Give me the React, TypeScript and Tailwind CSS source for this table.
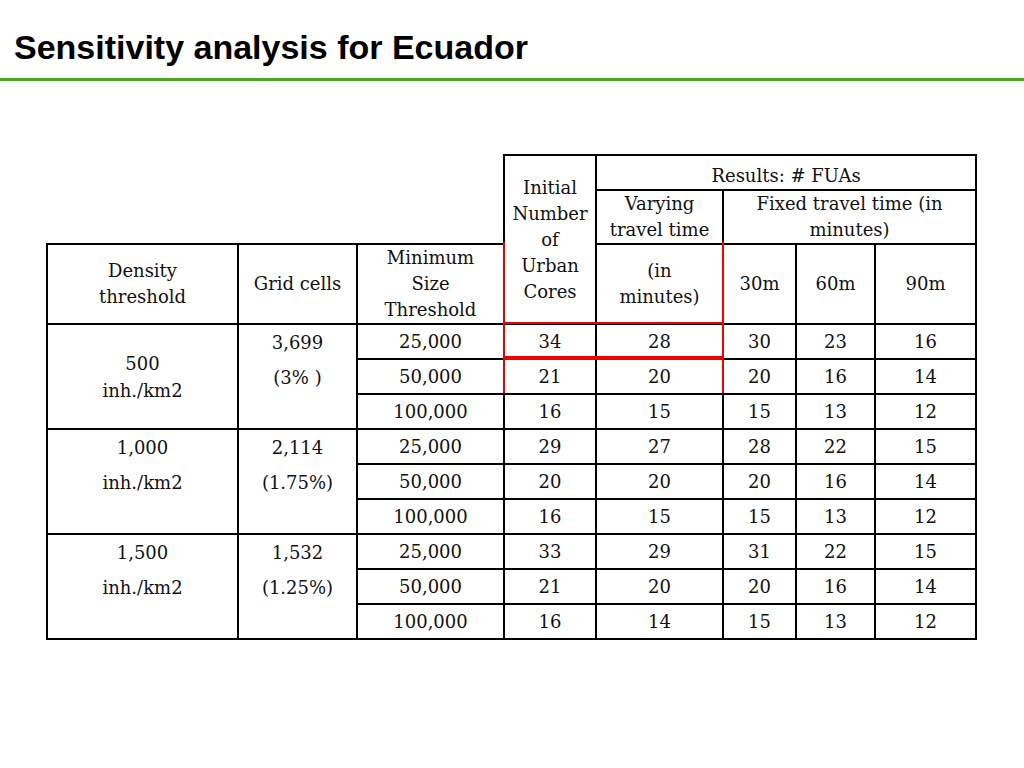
const serif = "font-['DejaVu_Serif',serif]";
const cell = 'border-2 border-black text-center align-middle p-0';

type Group = {
  density: [string, string];
  grid: [string, string];
  centered?: boolean;
  rows: string[][];
};

const groups: Group[] = [
  {
    density: ['500', 'inh./km2'],
    grid: ['3,699', '(3% )'],
    centered: true,
    rows: [
      ['25,000', '34', '28', '30', '23', '16'],
      ['50,000', '21', '20', '20', '16', '14'],
      ['100,000', '16', '15', '15', '13', '12'],
    ],
  },
  {
    density: ['1,000', 'inh./km2'],
    grid: ['2,114', '(1.75%)'],
    rows: [
      ['25,000', '29', '27', '28', '22', '15'],
      ['50,000', '20', '20', '20', '16', '14'],
      ['100,000', '16', '15', '15', '13', '12'],
    ],
  },
  {
    density: ['1,500', 'inh./km2'],
    grid: ['1,532', '(1.25%)'],
    rows: [
      ['25,000', '33', '29', '31', '22', '15'],
      ['50,000', '21', '20', '20', '16', '14'],
      ['100,000', '16', '14', '15', '13', '12'],
    ],
  },
];

function TwoLines({ lines }: { lines: [string, string] }) {
  return (
    <div className="flex flex-col">
      {lines.map((l) => (
        <div key={l} className="h-[35px] flex items-center justify-center">
          {l}
        </div>
      ))}
    </div>
  );
}

function SensitivityTable() {
  return (
    <div className="relative w-[931px]">
      <table className={`border-collapse table-fixed w-[931px] text-[18px] leading-[26px] text-[#111] ${serif}`}>
        <colgroup>
          <col className="w-[191px]" />
          <col className="w-[119px]" />
          <col className="w-[147px]" />
          <col className="w-[92px]" />
          <col className="w-[127px]" />
          <col className="w-[73px]" />
          <col className="w-[79px]" />
          <col className="w-[101px]" />
        </colgroup>
        <tbody>
          <tr className="h-[35px]">
            <td colSpan={3} rowSpan={2} className="p-0" />
            <td rowSpan={3} className={cell}>
              Initial<br />Number<br />of<br />Urban<br />Cores
            </td>
            <td colSpan={4} className={`${cell} pt-[7px] leading-[20px]`}>
              Results: # FUAs
            </td>
          </tr>
          <tr className="h-[53px]">
            <td className={cell}>
              Varying<br />travel time
            </td>
            <td colSpan={3} className={cell}>
              Fixed travel time (in<br />minutes)
            </td>
          </tr>
          <tr className="h-[80px]">
            <td className={cell}>
              Density<br />threshold
            </td>
            <td className={cell}>Grid cells</td>
            <td className={cell}>
              Minimum<br />Size<br />Threshold
            </td>
            <td className={cell}>
              (in<br />minutes)
            </td>
            <td className={cell}>30m</td>
            <td className={cell}>60m</td>
            <td className={cell}>90m</td>
          </tr>
          {groups.map((g) =>
            g.rows.map((r, i) => (
              <tr key={g.density[0] + r[0]} className="h-[35px]">
                {i === 0 && (
                  <>
                    <td rowSpan={3} className={`${cell} ${g.centered ? 'align-middle leading-[27px]' : 'align-top'}`}>
                      {g.centered ? (
                        <>
                          {g.density[0]}
                          <br />
                          {g.density[1]}
                        </>
                      ) : (
                        <TwoLines lines={g.density} />
                      )}
                    </td>
                    <td rowSpan={3} className={`${cell} align-top`}>
                      <TwoLines lines={g.grid} />
                    </td>
                  </>
                )}
                {r.map((v, j) => (
                  <td key={j} className={cell}>
                    {v}
                  </td>
                ))}
              </tr>
            ))
          )}
        </tbody>
      </table>
      {/* red highlight drawn over the first two result columns */}
      <div className="absolute left-[457px] top-[88px] w-[221px] h-[151px] border-x-2 border-[#f00000] flex flex-col pointer-events-none">
        <div className="h-[80px]" />
        <div className="h-[2px] bg-[#f00000]" />
        <div className="h-[32px]" />
        <div className="h-[4px] bg-[#f00000]" />
      </div>
    </div>
  );
}

export default function App() {
  return (
    <div className="w-[1024px] h-[768px] bg-white overflow-hidden">
      <div className="h-[78px] pl-[14px] pt-[28px]">
        <h1 className="font-['Liberation_Sans',Arial,sans-serif] font-bold text-[34px] leading-[38px] text-black">
          Sensitivity analysis for Ecuador
        </h1>
      </div>
      <div className="h-[3px] bg-[#4ea32a]" />
      <div className="pt-[73px] pl-[46px]">
        <SensitivityTable />
      </div>
    </div>
  );
}
